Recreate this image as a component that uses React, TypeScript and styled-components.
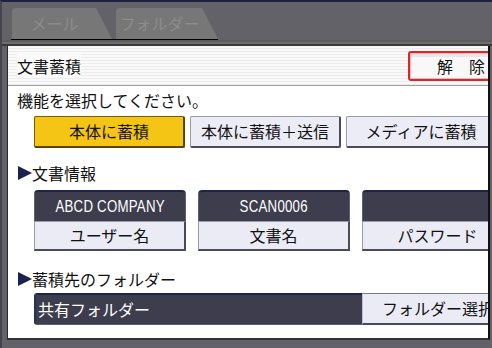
import styled, { createGlobalStyle } from 'styled-components';

const GlobalStyle = createGlobalStyle`
  html, body {
    margin: 0;
    padding: 0;
    background: #626268;
  }
  body {
    font-family: "Noto Sans CJK JP", "Noto Sans", sans-serif;
  }
`;

const Screen = styled.div`
  width: 492px;
  height: 348px;
  box-sizing: border-box;
  border-top: 2px solid #1c2140;
  border-left: 2px solid #44444c;
  background: #626268;
  overflow: hidden;
  display: flex;
  flex-direction: column;
`;

const TabBar = styled.div`
  height: 38px;
  box-sizing: border-box;
  padding: 7px 0 0 9px;
  display: flex;
`;

const TabGroup = styled.div`
  display: flex;
  gap: 4px;
  padding-left: 1px;
  border-bottom: 1px solid #000;
  align-items: flex-end;
`;

const Tab = styled.div<{ $w: number }>`
  width: ${(p) => p.$w}px;
  height: 31px;
  box-sizing: border-box;
  padding-right: 15px;
  background: #777777;
  border-top-left-radius: 4px;
  clip-path: polygon(0 0, calc(100% - 16px) 0, 100% 100%, 0 100%);
  color: #8c8c8c;
  font-size: 16px;
  line-height: 31px;
  text-align: center;
  white-space: nowrap;
`;

const Band = styled.div`
  height: 6px;
  background: linear-gradient(#5c5c5c 0, #5c5c5c 2px, #6e6e6e 2px, #6e6e6e 4px, #3a3a3a 4px);
`;

const Panel = styled.div`
  margin-left: 5px;
  width: 483px;
  height: 294px;
  box-sizing: border-box;
  background: #ffffff;
  border-left: 1px solid #2a2a2a;
  border-right: 2px solid #111;
  border-bottom: 2px solid #333;
  overflow: hidden;
  display: flex;
  flex-direction: column;
`;

const TitleRow = styled.div`
  height: 40px;
  box-sizing: border-box;
  display: flex;
  align-items: center;
  padding-left: 9px;
  border-bottom: 1px solid #a0a0a0;
  background: repeating-linear-gradient(#f9f9f9 0, #f9f9f9 2px, #ececec 2px, #ececec 3px);
`;

const Title = styled.span`
  font-size: 16px;
  color: #111;
  background: #fafafa;
`;

const CancelButton = styled.div`
  margin-left: auto;
  margin-right: -40px;
  margin-top: 1px;
  width: 120px;
  height: 30px;
  box-sizing: border-box;
  border: 2px solid #d42a2a;
  border-radius: 3px;
  box-shadow: inset 0 0 0 1px #f0b4c0;
  background: linear-gradient(#e8e8e8 0, #e8e8e8 4px, #f8f8f8 4px);
  padding-left: 27px;
  font-size: 16px;
  line-height: 26px;
  color: #111;
  white-space: nowrap;
`;

const Content = styled.div`
  padding-left: 9px;
  display: flex;
  flex-direction: column;
`;

const Prompt = styled.div`
  height: 30px;
  font-size: 16px;
  line-height: 28px;
  color: #111;
`;

const ButtonRow = styled.div`
  display: flex;
  gap: 5px;
  padding-left: 17px;
`;

const ModeButton = styled.div<{ $active?: boolean }>`
  flex: 0 0 151px;
  height: 32px;
  box-sizing: border-box;
  background: ${(p) => (p.$active ? '#f5c516' : '#ececf6')};
  border: 1px solid ${(p) => (p.$active ? '#7a5c00' : '#9a9aa8')};
  border-right: 2px solid ${(p) => (p.$active ? '#5a4400' : '#4a4a58')};
  border-bottom: 2px solid ${(p) => (p.$active ? '#5a4400' : '#4a4a58')};
  border-radius: 2px;
  font-size: 16px;
  line-height: 29px;
  text-align: center;
  color: #111;
  white-space: nowrap;
`;

const SectionHeader = styled.div<{ $top: number; $bottom: number }>`
  padding-top: ${(p) => p.$top}px;
  margin-bottom: ${(p) => p.$bottom}px;
  height: 16px;
  font-size: 16px;
  line-height: 16px;
  color: #111;
  display: flex;
  align-items: center;
  white-space: nowrap;
`;

const Arrow = styled.span`
  width: 0;
  height: 0;
  border-top: 7px solid transparent;
  border-bottom: 7px solid transparent;
  border-left: 14px solid #1b2150;
  margin-left: 1px;
`;

const FieldGrid = styled.div`
  display: grid;
  grid-template-columns: 152px 152px 152px;
  column-gap: 12px;
  padding-left: 17px;
`;

const Field = styled.div`
  display: flex;
  flex-direction: column;
`;

const ValueBox = styled.div`
  height: 31px;
  box-sizing: border-box;
  background: #3d3d4d;
  border-top: 2px solid #1e2448;
  border-left: 1px solid #606070;
  border-right: 1px solid #606070;
  border-radius: 4px 4px 0 0;
  color: #fff;
  display: flex;
  align-items: center;
  justify-content: center;
  white-space: nowrap;
`;

const LatinText = styled.span`
  display: inline-block;
  font-family: "Liberation Sans", Arial, sans-serif;
  font-size: 17px;
  transform: scaleX(0.78);
  letter-spacing: 0.3px;
`;

const LabelButton = styled.div`
  height: 30px;
  box-sizing: border-box;
  background: #ebebf5;
  border: 1px solid #9a9aa8;
  border-right: 2px solid #4a4a58;
  border-bottom: 2px solid #4a4a58;
  font-size: 16px;
  line-height: 27px;
  text-align: center;
  color: #111;
  white-space: nowrap;
`;

const FolderRow = styled.div`
  display: flex;
  padding-left: 17px;
`;

const FolderValue = styled.div`
  flex: 0 0 328px;
  height: 32px;
  box-sizing: border-box;
  background: #3d3d4d;
  border-top: 2px solid #1e2448;
  border-left: 2px solid #2a3058;
  border-bottom: 1px solid #606070;
  border-radius: 3px 0 0 3px;
  padding-left: 2px;
  color: #fff;
  font-size: 16px;
  line-height: 28px;
  white-space: nowrap;
`;

const FolderButton = styled.div`
  flex: 0 0 140px;
  height: 32px;
  box-sizing: border-box;
  background: #ebebf5;
  border-top: 1px solid #7a7a88;
  border-left: 1px solid #c0c0cc;
  border-bottom: 2px solid #4a4a58;
  padding-left: 19px;
  font-size: 16px;
  line-height: 29px;
  color: #111;
  white-space: nowrap;
`;

const fields = [
  { value: 'ABCD COMPANY', label: 'ユーザー名' },
  { value: 'SCAN0006', label: '文書名' },
  { value: '', label: 'パスワード' },
];

export default function App() {
  return (
    <>
      <GlobalStyle />
      <Screen>
        <TabBar>
          <TabGroup>
            <Tab $w={100}>メール</Tab>
            <Tab $w={102}>フォルダー</Tab>
          </TabGroup>
        </TabBar>
        <Band />
        <Panel>
          <TitleRow>
            <Title>文書蓄積</Title>
            <CancelButton>解　除</CancelButton>
          </TitleRow>
          <Content>
            <Prompt>機能を選択してください。</Prompt>
            <ButtonRow>
              <ModeButton $active>本体に蓄積</ModeButton>
              <ModeButton>本体に蓄積＋送信</ModeButton>
              <ModeButton>メディアに蓄積</ModeButton>
            </ButtonRow>
            <SectionHeader $top={17} $bottom={9}>
              <Arrow />
              文書情報
            </SectionHeader>
            <FieldGrid>
              {fields.map((f) => (
                <Field key={f.label}>
                  <ValueBox>
                    <LatinText>{f.value}</LatinText>
                  </ValueBox>
                  <LabelButton>{f.label}</LabelButton>
                </Field>
              ))}
            </FieldGrid>
            <SectionHeader $top={20} $bottom={6}>
              <Arrow />
              蓄積先のフォルダー
            </SectionHeader>
            <FolderRow>
              <FolderValue>共有フォルダー</FolderValue>
              <FolderButton>フォルダー選択</FolderButton>
            </FolderRow>
          </Content>
        </Panel>
      </Screen>
    </>
  );
}
